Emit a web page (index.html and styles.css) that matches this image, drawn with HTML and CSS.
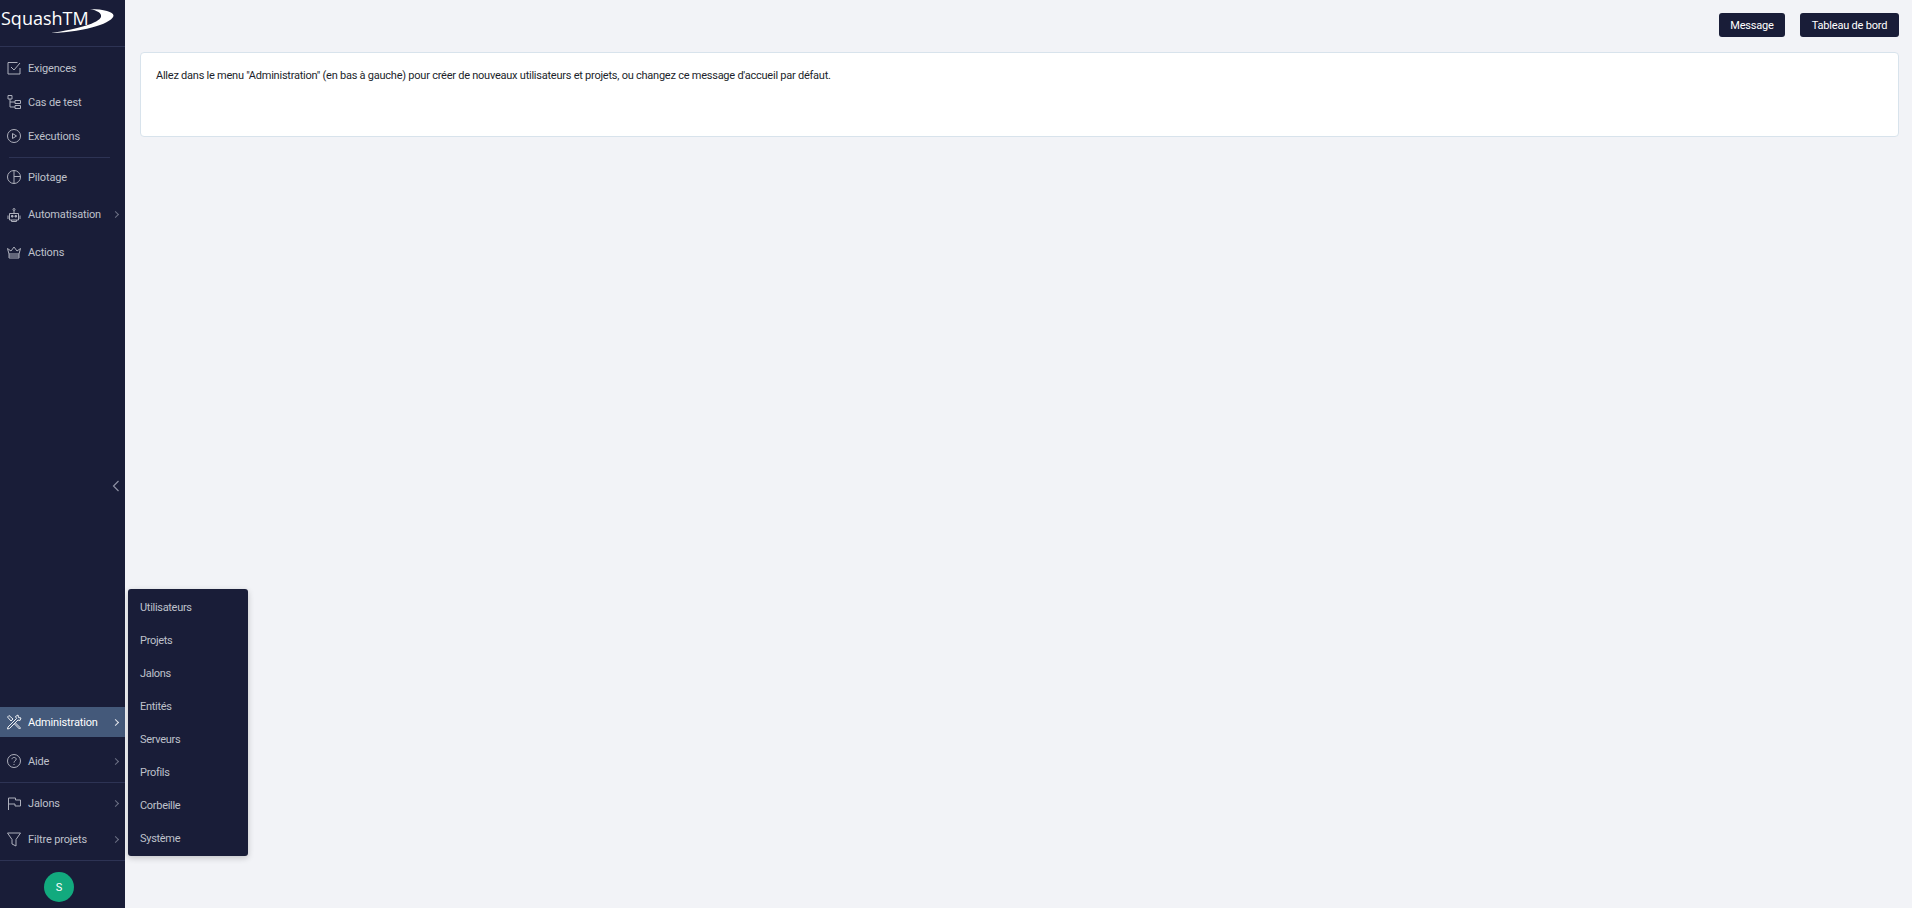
FILE: index.html
```html
<!DOCTYPE html>
<html lang="fr">
<head>
<meta charset="utf-8">
<title>Squash TM</title>
<link rel="stylesheet" href="styles.css">
</head>
<body>
<div class="app">
  <aside class="sidebar">
    <div class="logo">
      <span class="logo-text">SquashTM</span>
      <svg class="logo-swoosh" viewBox="0 0 115 36" width="115" height="36"><path d="M90 9 C104 9 113.500 12 113.500 15.500 C113.500 22 88 32 51 33 C78 29 99 23 101 17 C102 13 97 10.500 90 9 Z" fill="#fff"/></svg>
    </div>
    <nav class="nav-top">
      <a class="item"><svg class="ico" viewBox="0 0 16 16"><path d="M14 8v6H2V2.500h9.500M5 7l3 3 6-7"/></svg><span class="label">Exigences</span></a>
      <a class="item"><svg class="ico" viewBox="0 0 16 16"><path d="M2 1.500h4v3.500H2zM9 6.500h5.500v3H9zM9 11.500h5.500v3H9zM4 5v8h5M4 8h5"/></svg><span class="label">Cas de test</span></a>
      <a class="item"><svg class="ico" viewBox="0 0 16 16"><circle cx="8" cy="8" r="6.500"/><path d="M6.500 5.500 10.500 8l-4 2.500z"/></svg><span class="label">Exécutions</span></a>
      <div class="divider inset"></div>
      <a class="item"><svg class="ico" viewBox="0 0 16 16"><circle cx="8" cy="8" r="6.500"/><path d="M8 1.500v13M8 7.500h6.500"/></svg><span class="label">Pilotage</span></a>
      <a class="item gap-top"><svg class="ico" viewBox="0 0 16 16"><path d="M3.500 6.500h9v6.500h-9zM8 6.500V3.500M2 8.500V12M14 8.500V12M5.500 13v1.500h5V13"/><circle cx="8" cy="2.500" r="1"/><path d="M5.500 8.500h1.500V10H5.500zM9 8.500h1.500V10H9z" fill="currentColor"/></svg><span class="label">Automatisation</span><span class="chev"></span></a>
      <a class="item gap-top"><svg class="ico" viewBox="0 0 16 16"><path d="M3 10 1.500 4.500 5 7l3-4 3 4 3.500-2.500L13 10zM3 10v4h10v-4M3 12h10"/></svg><span class="label">Actions</span></a>
    </nav>
    <button class="collapse" aria-label="Réduire"><svg viewBox="0 0 8 12" width="8" height="12"><path d="M6.500 1 1.500 6l5 5"/></svg></button>
    <nav class="nav-bottom">
      <a class="item active"><svg class="ico tools" viewBox="0 0 16 16"><path d="M2 13 10.500 4.500M3.500 14.500 12 6M2 13l-.5 2 2-.5M10.500 4.500 9.500 2.500 12 1l.5 2.500L15 4l-1 2.500-2-.5M3 1.500 1.500 3 5 7l2-2zM9.500 9l5 5-1 1-5-5"/></svg><span class="label">Administration</span><span class="chev"></span></a>
      <a class="item help"><svg class="ico" viewBox="0 0 16 16"><circle cx="8" cy="8" r="6.500"/><path d="M6 6.200C6 3.800 10.200 3.900 10.200 6.200 10.200 7.800 8 7.800 8 9.600M8 11v1"/></svg><span class="label">Aide</span><span class="chev"></span></a>
      <div class="divider"></div>
      <a class="item"><svg class="ico" viewBox="0 0 16 16"><path d="M2.500 15V3h7v2h5v6H9V9H2.500"/></svg><span class="label">Jalons</span><span class="chev"></span></a>
      <a class="item"><svg class="ico" viewBox="0 0 16 16"><path d="M1.500 2h13L10 8.500V15l-4-2V8.500z"/></svg><span class="label">Filtre projets</span><span class="chev"></span></a>
      <div class="divider"></div>
      <div class="avatar-row"><span class="avatar">S</span></div>
    </nav>
  </aside>
  <main class="main">
    <div class="toolbar">
      <button class="btn btn-message">Message</button>
      <button class="btn btn-board">Tableau de bord</button>
    </div>
    <section class="card">Allez dans le menu "Administration" (en bas à gauche) pour créer de nouveaux utilisateurs et projets, ou changez ce message d'accueil par défaut.</section>
  </main>
  <ul class="flyout">
    <li>Utilisateurs</li>
    <li>Projets</li>
    <li>Jalons</li>
    <li>Entités</li>
    <li>Serveurs</li>
    <li>Profils</li>
    <li>Corbeille</li>
    <li>Système</li>
  </ul>
</div>
</body>
</html>
```
FILE: styles.css
```css
* { box-sizing: border-box; }
html, body { margin: 0; height: 100%; overflow: hidden; }
body { font-family: "Roboto", "Open Sans", sans-serif; font-size: 11px; letter-spacing: -.15px; background: #f2f3f7; }
.app { position: relative; display: flex; height: 908px; }

.sidebar { position: relative; flex: 0 0 125px; width: 125px; display: flex; flex-direction: column; justify-content: space-between; background: #191d38; color: #bfc1cb; }
.logo { position: relative; height: 47px; border-bottom: 1px solid #2d3354; }
.logo-text { position: absolute; left: 1px; top: 4px; font-family: "Open Sans", sans-serif; font-size: 18px; letter-spacing: 0; line-height: 28px; color: #fff; }
.logo-swoosh { position: absolute; left: 0; top: 0; }

.nav-top { display: flex; flex-direction: column; padding-top: 4px; flex: 1; }
.nav-bottom { display: flex; flex-direction: column; }

.item { display: flex; align-items: center; height: 34px; padding-left: 6px; flex: none; }
.item.gap-top { margin-top: 3.500px; }
.nav-bottom .item { height: 30px; margin-bottom: 6px; }
.nav-bottom .item.active { background: #44597a; color: #fff; margin-bottom: 9px; }
.ico { width: 16px; height: 16px; fill: none; stroke: currentColor; stroke-width: 1; flex: none; opacity: .9; }
.label { margin-left: 6px; white-space: nowrap; }
.chev { margin-left: auto; margin-right: 7px; width: 5px; height: 5px; border-top: 1.500px solid #6d7185; border-right: 1.500px solid #6d7185; transform: rotate(45deg); }
.active .chev { border-color: #e4e6ec; }

.divider { height: 1px; background: #2d3354; flex: none; }
.divider.inset { margin: 4px 15px 2px 9px; }
.nav-bottom .divider { margin-bottom: 5px; }
.avatar-row { display: flex; justify-content: center; padding: 6px 7px 0 0; height: 42px; }
.avatar { width: 30px; height: 30px; border-radius: 50%; background: #12aa7e; color: #fff; display: flex; align-items: center; justify-content: center; font-size: 11px; }

.collapse { position: absolute; left: 111px; top: 479px; width: 10px; height: 14px; padding: 0; border: 0; background: none; display: flex; align-items: center; justify-content: center; }
.collapse svg { fill: none; stroke: #8d90a2; stroke-width: 1.200; }

.main { flex: 1; min-width: 0; padding: 13px 13px 0 15px; }
.toolbar { display: flex; justify-content: flex-end; gap: 15px; margin-bottom: 15px; }
.btn { height: 24px; padding: 0; border: 0; border-radius: 3px; background: #191d38; color: #fff; font: inherit; letter-spacing: -.2px; }
.btn-message { width: 66px; }
.btn-board { width: 99px; }
.card { height: 85px; padding: 15px; background: #fff; border: 1px solid #d8e3ec; border-radius: 4px; color: #1c1f2b; line-height: 16px; letter-spacing: -.24px; }

.flyout { position: absolute; left: 128px; top: 589px; width: 120px; height: 267px; margin: 0; padding: 1.500px 0 0; list-style: none; background: #191d38; border-radius: 3px; color: #bfc1cb; box-shadow: 0 2px 6px rgba(0,0,0,.2); letter-spacing: -.3px; }
.flyout li { height: 33px; line-height: 33px; padding-left: 12px; }
```
